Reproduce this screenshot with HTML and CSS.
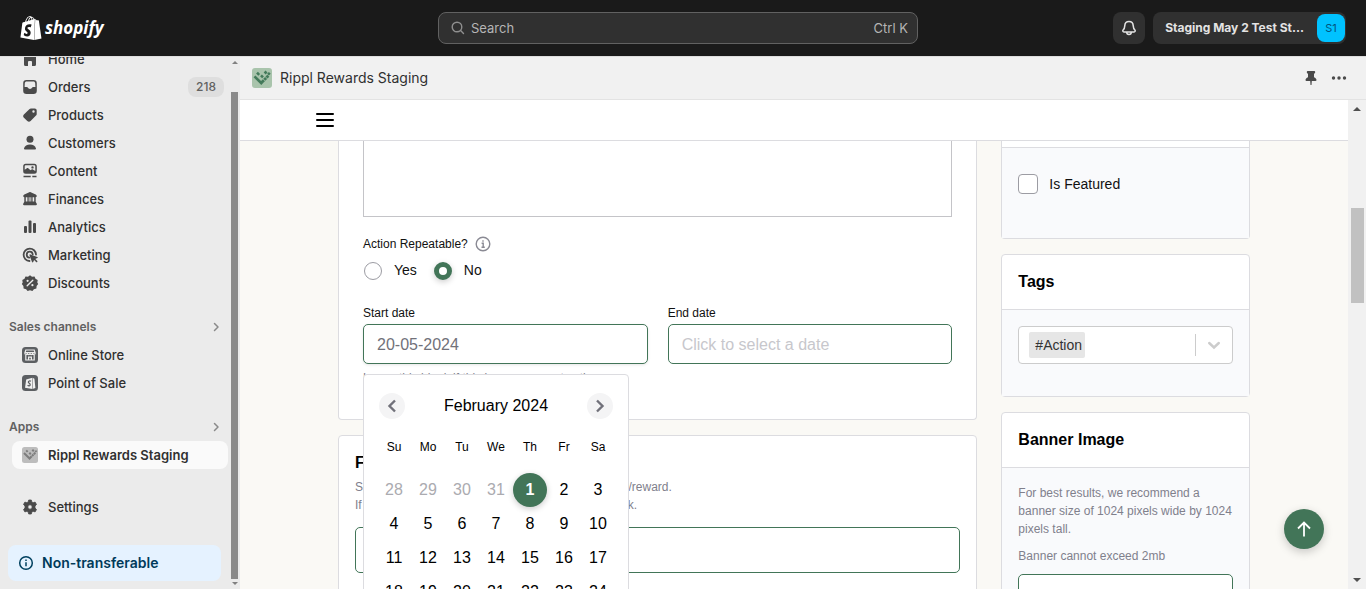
FILE: index.html
```
<!DOCTYPE html>
<html lang="en">
<head>
<meta charset="utf-8">
<title>Rippl Rewards Staging</title>
<link rel="stylesheet" href="styles.css">
</head>
<body>
<header class="topbar">
  <a class="logo" href="#" aria-label="Shopify">
    <svg width="24" height="24" viewBox="0 0 24 24" fill="#fff"><path d="M15.337 23.979l7.216-1.561s-2.604-17.613-2.625-17.73c-.018-.116-.114-.192-.211-.192s-1.929-.136-1.929-.136-1.275-1.274-1.439-1.411c-.045-.037-.075-.057-.121-.074l-.914 21.104h.023zM11.71 11.305s-.81-.424-1.774-.424c-1.447 0-1.504.906-1.504 1.141 0 1.232 3.24 1.715 3.24 4.629 0 2.295-1.44 3.76-3.406 3.76-2.354 0-3.54-1.465-3.54-1.465l.646-2.086s1.245 1.066 2.28 1.066c.675 0 .975-.545.975-.932 0-1.619-2.654-1.694-2.654-4.359-.034-2.237 1.571-4.416 4.827-4.416 1.257 0 1.875.361 1.875.361l-.945 2.715-.02.01zM11.17.83c.136 0 .271.038.405.135-.984.465-2.064 1.639-2.508 3.992-.656.213-1.293.405-1.889.578C7.697 3.75 8.951.84 11.17.84V.83zm1.235 2.949v.135c-.754.232-1.583.484-2.394.736.466-1.777 1.333-2.645 2.085-2.971.193.501.309 1.176.309 2.1zm.539-2.234c.694.074 1.141.867 1.429 1.755-.349.114-.735.231-1.158.366v-.252c0-.752-.096-1.371-.271-1.871v.002zm2.992 1.289c-.02 0-.06.021-.078.021s-.289.075-.714.21c-.423-1.233-1.176-2.37-2.508-2.37h-.115C12.135.209 11.669 0 11.265 0 8.159 0 6.675 3.877 6.21 5.846c-1.194.365-2.063.636-2.16.674-.675.213-.694.232-.772.87-.075.462-1.83 14.063-1.83 14.063L15.009 24l.927-21.166z"/></svg>
    <span class="wordmark">shopify</span>
  </a>
  <button class="search" type="button">
    <svg width="14" height="14" viewBox="0 0 14 14" fill="none" stroke="#8f8f8f" stroke-width="1.4" stroke-linecap="round"><circle cx="6" cy="6" r="4.8"/><path d="M9.6 9.6L12.500 12.500"/></svg>
    <span class="search-text">Search</span>
    <span>Ctrl K</span>
  </button>
  <div class="account">
    <button class="bell" type="button" aria-label="Notifications">
      <svg width="16" height="16" viewBox="0 0 16 16" fill="none" stroke="#e3e3e3" stroke-width="1.5" stroke-linejoin="round"><path d="M8 1.5c-2.4 0-4.1 1.8-4.2 4.1-.1 2.6-.6 3.3-1.7 4.4-.7.8-.2 1.9.8 1.9h10.2c1 0 1.500-1.100.8-1.900-1.100-1.100-1.600-1.800-1.700-4.400C12.100 3.300 10.400 1.500 8 1.500z"/><path d="M5.700 12c0 1.500.9 2.500 2.300 2.500s2.300-1 2.300-2.500"/></svg>
    </button>
    <button class="store" type="button"><span class="store-name">Staging May 2 Test St...</span><span class="avatar">S1</span></button>
  </div>
</header>
<div class="shell">
  <aside class="sidebar">
    <nav class="nav">
      <a class="nav-item" href="#"><svg class="icon" viewBox="0 0 20 20"><path d="M10 3l-6 5v7.500A1.500 1.500 0 0 0 5.500 17H8v-4a1 1 0 0 1 1-1h2a1 1 0 0 1 1 1v4h2.500a1.500 1.500 0 0 0 1.500-1.500V8z"/></svg>Home</a>
      <a class="nav-item" href="#"><svg class="icon" viewBox="0 0 20 20"><path fill-rule="evenodd" d="M6.500 3h7A3.300 3.300 0 0 1 16.800 6.300v7.400A3.300 3.300 0 0 1 13.500 17h-7a3.300 3.300 0 0 1-3.300-3.300V6.300A3.300 3.300 0 0 1 6.500 3zm.2 1.500c-1 0-1.800.7-1.900 1.700L4.600 10h2.200c.6 0 .9.300 1.200.8.400.7 1 1.200 2 1.200s1.600-.5 2-1.200c.300-.5.600-.8 1.200-.8h2.200l-.2-3.800c-.1-1-.9-1.700-1.900-1.700z"/></svg>Orders<span class="badge">218</span></a>
      <a class="nav-item" href="#"><svg class="icon" viewBox="0 0 20 20"><path fill-rule="evenodd" d="M11 3.500h3.700c1.200 0 2 .8 2 1.900v3.500c0 .7-.2 1.200-.7 1.700l-5.400 5.400c-1 1-2.300 1-3.300 0l-3.400-3.300c-1-1-1-2.300 0-3.300l5.400-5.200c.5-.5 1-.7 1.700-.7zm2.500 4.200a1.200 1.200 0 1 0 0-2.400 1.200 1.200 0 0 0 0 2.400z"/></svg>Products</a>
      <a class="nav-item" href="#"><svg class="icon" viewBox="0 0 20 20"><circle cx="10" cy="6.300" r="3.500"/><path d="M4 15.500c.6-2.700 3-4 6-4s5.400 1.300 6 4c.1.500-.3.900-.8.900H4.800c-.5 0-.9-.4-.8-.9z"/></svg>Customers</a>
      <a class="nav-item" href="#"><svg class="icon" viewBox="0 0 20 20"><path fill-rule="evenodd" d="M5.700 2.800h8.600a2.500 2.500 0 0 1 2.500 2.500v5a2.500 2.500 0 0 1-2.500 2.500H5.700a2.500 2.500 0 0 1-2.500-2.500v-5a2.500 2.500 0 0 1 2.500-2.500zm0 1.500a1 1 0 0 0-1 1v3.400l2.200-1.500c.5-.3.900-.3 1.300 0l2.300 2 1.100-.8c.4-.3.900-.3 1.300 0l2.400 1.600V5.300a1 1 0 0 0-1-1zm6.800 3.300a1.200 1.200 0 1 0 0-2.400 1.200 1.200 0 0 0 0 2.400z"/><path d="M3.500 14.700h7.200v1.500H3.500zM12.300 14.700h4.200v1.500h-4.200z"/></svg>Content</a>
      <a class="nav-item" href="#"><svg class="icon" viewBox="0 0 20 20"><path d="M9.300 3.200c.5-.2.900-.2 1.400 0l5 2.300c.7.300 1.100.9 1.100 1.600 0 .7-.5 1.100-1.100 1.100H4.300c-.6 0-1.100-.4-1.100-1.100 0-.7.400-1.300 1.100-1.600zM4.300 8.200h1.500V13H4.300zM7.400 8.200h1.300V13H7.400zM11.300 8.200h1.300V13h-1.300zM14.200 8.200h1.500V13h-1.500zM9.600 8.200h.8V13h-.8zM4.500 12.600h11l1.300 2.200c.3.700-.1 1.400-.8 1.400H4c-.7 0-1.100-.7-.8-1.400z"/></svg>Finances</a>
      <a class="nav-item" href="#"><svg class="icon" viewBox="0 0 20 20"><rect x="4" y="9" width="3" height="7" rx="1"/><rect x="8.500" y="3.500" width="3" height="12.500" rx="1"/><rect x="13" y="6" width="3" height="10" rx="1"/></svg>Analytics</a>
      <a class="nav-item" href="#"><svg class="icon" viewBox="0 0 20 20"><path fill="none" stroke="#4a4a4a" stroke-width="1.800" stroke-linecap="round" d="M16 9.500A6.200 6.200 0 1 0 9.500 16"/><path fill="none" stroke="#4a4a4a" stroke-width="1.800" stroke-linecap="round" d="M12.700 9.300a3 3 0 1 0-3.300 3.400"/><path d="M10.300 9.400l7 2.500c.6.200.6 1 0 1.200l-2 .9 2 2c.6.700-.5 1.700-1.200 1.100l-2-2-.9 2c-.2.600-1 .6-1.200 0l-2.500-6.900c-.2-.5.300-1 .8-.8z"/></svg>Marketing</a>
      <a class="nav-item" href="#"><svg class="icon" viewBox="0 0 20 20"><path d="M10 2.300l2 1.500 2.500-.3 1 2.300 2.200 1.200-.4 2.500.9 1.600-1.600 1.900-.2 2.500-2.500.7-1.500 1.800-2.400-.7-2.400.7-1.500-1.800-2.500-.7-.2-2.500L1.800 11.100l.9-1.600L2.300 7l2.200-1.200 1-2.300 2.500.3z"/><path d="M7.200 12.800l5.600-5.600" stroke="#ebebeb" stroke-width="1.400" stroke-linecap="round"/><circle cx="7.600" cy="7.800" r="1.100" fill="#ebebeb"/><circle cx="12.400" cy="12.200" r="1.100" fill="#ebebeb"/></svg>Discounts</a>
      <a class="nav-heading" href="#">Sales channels<svg width="8" height="10" viewBox="0 0 8 10" fill="none" stroke="#8a8a8a" stroke-width="1.500" stroke-linecap="round" stroke-linejoin="round"><path d="M2.500 1.500L6 5 2.500 8.500"/></svg></a>
      <a class="nav-item" href="#"><svg class="icon" viewBox="0 0 20 20"><rect x="2" y="2" width="16" height="16" rx="3.500" fill="#5c5f62"/><g fill="none" stroke="#ebebeb" stroke-width="1.200"><path d="M5.800 5h8.400l1 3c0 2-2.600 2-2.600.2 0 2-2.600 2-2.600 0 0 2-2.600 2-2.600 0C7.400 10 4.800 10 4.800 8zM4.800 7.700h10.400M5.800 10v5h8.400v-5M8.600 15v-2.800h2.800V15"/></g></svg>Online Store</a>
      <a class="nav-item" href="#"><svg class="icon" viewBox="0 0 20 20"><rect x="2" y="2" width="16" height="16" rx="3.500" fill="#5c5f62"/><path d="M6.200 6.500l6.300-1.800v11.200L5 14.700zM13 4.900l1.400.9 1 9.200-2.400.8z" fill="#f1f1f1"/><path d="M11 8.300c-1.200-.8-2.700-.3-2.600.9.100 1.200 2 1.100 1.800 2.600-.2 1.200-1.600 1.300-2.600.4" fill="none" stroke="#5c5f62" stroke-width="1.300"/></svg>Point of Sale</a>
      <a class="nav-heading" href="#">Apps<svg width="8" height="10" viewBox="0 0 8 10" fill="none" stroke="#8a8a8a" stroke-width="1.500" stroke-linecap="round" stroke-linejoin="round"><path d="M2.500 1.500L6 5 2.500 8.500"/></svg></a>
      <a class="nav-item active" href="#"><svg class="icon" viewBox="0 0 20 20"><rect x="2" y="2" width="16" height="16" rx="2.500" fill="#bdbdbd"/><g stroke="#7d7d7d" stroke-width="2" fill="none"><path d="M4 8l6.300 6.300M10.200 11.300l1.500 1.500M12 9.500l1.500 1.500M13.800 7.700l1.500 1.500M15.300 5.700l1.200 1.200M6.200 5.400l1.500 1.500M12.300 4.800l1.500 1.500M9.300 7.700l1.500 1.500"/></g></svg>Rippl Rewards Staging</a>
      <a class="nav-item settings" href="#"><svg class="icon" viewBox="0 0 20 20"><path fill-rule="evenodd" d="M8.700 3h2.600l.5 2 1.300.7 2-.6 1.400 2.400-1.500 1.500v2l1.500 1.500-1.400 2.400-2-.6-1.300.7-.5 2H8.700l-.5-2-1.300-.7-2 .6-1.400-2.400L5 11V9L3.500 7.500l1.400-2.400 2 .6L8.200 5zM10 12.200a2.200 2.200 0 1 0 0-4.400 2.200 2.200 0 0 0 0 4.400z" stroke="#4a4a4a" stroke-width=".8" stroke-linejoin="round"/></svg>Settings</a>
      <a class="notice" href="#"><svg width="16" height="16" viewBox="0 0 16 16" fill="none" stroke="#00405f" stroke-width="1.500"><circle cx="8" cy="8" r="6.300"/><path d="M8 7.300v4M8 4.500v1.600"/></svg>Non-transferable</a>
    </nav>
    <div class="side-scroll" aria-hidden="true"><i class="arrow up"></i><i class="thumb"></i><i class="arrow down"></i></div>
  </aside>
  <main class="main">
    <div class="appbar">
      <svg width="20" height="20" viewBox="0 0 20 20"><rect width="20" height="20" rx="3" fill="#a9c4ac"/><g stroke="#437a5a" stroke-width="2.600" fill="none"><path d="M2.500 8.300l7.700 7.700M10 12.200l2 2M12.200 9.900l2 2M14.400 7.600l2 2M16 4.800l1.800 1.800M5 4.600l2.200 2.200M12.600 3.500l2 2M9 7.300l2 2"/></g></svg>
      <h1 class="app-title">Rippl Rewards Staging</h1>
      <button class="icon-button" type="button" aria-label="Pin"><svg width="16" height="16" viewBox="0 0 16 16" fill="#4a4a4a"><path d="M4.700 1h6.600c.6 0 .9.400.9.900 0 1-.6 1.500-1.200 1.800v3.600c1.500.8 2.500 1.700 2.500 2.800 0 .5-.4.900-.9.900H8.800l-.3 4h-1l-.3-4H3.400c-.5 0-.9-.4-.9-.9 0-1.100 1-2 2.500-2.800V3.700c-.6-.3-1.200-.8-1.200-1.800 0-.5.300-.9.900-.9z"/></svg></button>
      <button class="icon-button" type="button" aria-label="More actions"><svg width="16" height="16" viewBox="0 0 16 16" fill="#4a4a4a"><circle cx="2.500" cy="8" r="1.700"/><circle cx="8" cy="8" r="1.700"/><circle cx="13.500" cy="8" r="1.700"/></svg></button>
    </div>
    <div class="frame">
      <div class="page">
        <div class="menubar"><button class="icon-button" type="button" aria-label="Menu"><svg width="18" height="16" viewBox="0 0 18 16" stroke="#000" stroke-width="2" stroke-linecap="round"><path d="M1 2h16M1 8h16M1 14h16"/></svg></button></div>
        <div class="columns">
          <div class="stack">
            <section class="card form clipped">
              <textarea class="editor" aria-label="Description"></textarea>
              <div class="repeat-label">Action Repeatable?<svg width="16" height="16" viewBox="0 0 16 16" fill="none" stroke="#8a8a94" stroke-width="1.400"><circle cx="8" cy="8" r="6.800"/><path d="M6.600 7.300h1.600V11M6.500 11.300h3.300M8 4.300v1.400"/></svg></div>
              <div class="radios">
                <label class="choice"><input class="radio" type="radio" name="repeat">Yes</label>
                <label class="choice"><input class="radio" type="radio" name="repeat" checked>No</label>
              </div>
              <div class="dates">
                <div class="field">
                  <label class="label" for="start">Start date</label>
                  <input class="input start" id="start" type="text" value="20-05-2024">
                  <p class="hint">Leave this blank if this is a permanent action.</p>
                  <div class="calendar">
                    <div class="cal-head">
                      <button class="cal-nav" type="button" aria-label="Previous month"><svg width="10" height="14" viewBox="0 0 10 14" fill="none" stroke="#71717a" stroke-width="2.400"><path d="M8 1.500L2.500 7 8 12.500"/></svg></button>
                      <span>February 2024</span>
                      <button class="cal-nav" type="button" aria-label="Next month"><svg width="10" height="14" viewBox="0 0 10 14" fill="none" stroke="#71717a" stroke-width="2.400"><path d="M2 1.500L7.500 7 2 12.500"/></svg></button>
                    </div>
                    <div class="week names"><span>Su</span><span>Mo</span><span>Tu</span><span>We</span><span>Th</span><span>Fr</span><span>Sa</span></div>
                    <div class="week">
                      <button class="day out" type="button">28</button><button class="day out" type="button">29</button><button class="day out" type="button">30</button><button class="day out" type="button">31</button><button class="day picked" type="button">1</button><button class="day" type="button">2</button><button class="day" type="button">3</button>
                      <button class="day" type="button">4</button><button class="day" type="button">5</button><button class="day" type="button">6</button><button class="day" type="button">7</button><button class="day" type="button">8</button><button class="day" type="button">9</button><button class="day" type="button">10</button>
                      <button class="day" type="button">11</button><button class="day" type="button">12</button><button class="day" type="button">13</button><button class="day" type="button">14</button><button class="day" type="button">15</button><button class="day" type="button">16</button><button class="day" type="button">17</button>
                      <button class="day" type="button">18</button><button class="day" type="button">19</button><button class="day" type="button">20</button><button class="day" type="button">21</button><button class="day" type="button">22</button><button class="day" type="button">23</button><button class="day" type="button">24</button>
                    </div>
                  </div>
                </div>
                <div class="field">
                  <label class="label" for="end">End date</label>
                  <input class="input" id="end" type="text" placeholder="Click to select a date">
                </div>
              </div>
            </section>
            <section class="card filters">
              <h2 class="title">Filters</h2>
              <p class="note">Select which customers are able to open this action/reward.<br>If everyone can view it, you can leave this field blank.</p>
              <input class="input tall" type="text" aria-label="Filters">
            </section>
          </div>
          <div class="stack">
            <section class="card clipped">
              <div class="card-head slim"></div>
              <div class="card-body featured"><label class="choice"><input class="check" type="checkbox">Is Featured</label></div>
            </section>
            <section class="card">
              <div class="card-head"><h2 class="title">Tags</h2></div>
              <div class="card-body">
                <div class="tagbox">
                  <select class="tag" aria-label="Tags"><option>#Action</option></select>
                  <svg width="16" height="22" viewBox="0 0 16 22" fill="none" stroke="#ccc" stroke-width="2.400" stroke-linecap="round"><path d="M3.200 9L8 13.500 12.800 9"/></svg>
                </div>
              </div>
            </section>
            <section class="card">
              <div class="card-head"><h2 class="title">Banner Image</h2></div>
              <div class="card-body banner">
                <p class="note">For best results, we recommend a banner size of 1024 pixels wide by 1024 pixels tall.</p>
                <p class="note">Banner cannot exceed 2mb</p>
                <input class="input tall" type="text" aria-label="Banner image">
              </div>
            </section>
          </div>
        </div>
      </div>
      <div class="page-scroll" aria-hidden="true"><i class="arrow up"></i><i class="thumb"></i><i class="arrow down"></i></div>
    </div>
  </main>
</div>
<button class="to-top" type="button" aria-label="Back to top"><svg width="14" height="16" viewBox="0 0 14 16" fill="none" stroke="#fff" stroke-width="1.800"><path d="M7 15.500V1.500M1 7.500l6-6 6 6"/></svg></button>
</body>
</html>
```
FILE: styles.css
```
*, *::before, *::after { box-sizing: border-box; }
body {
  margin: 0;
  height: 100vh;
  display: flex;
  flex-direction: column;
  overflow: hidden;
  background: #ebebeb;
  color: #303030;
  font: 500 13px/20px Inter, sans-serif;
}
button, input, select, textarea { font: inherit; color: inherit; margin: 0; }
button { border: 0; padding: 0; background: none; cursor: pointer; }
a { color: inherit; text-decoration: none; }
h1, h2, p { margin: 0; }
svg { flex: none; display: block; }

.topbar {
  flex: none;
  position: relative;
  z-index: 2;
  height: 56px;
  padding: 0 20px 0 10px;
  display: grid;
  grid-template-columns: 1fr minmax(0, 480px) 1fr;
  align-items: center;
  background: #1a1a1a;
}
.logo { display: flex; align-items: center; gap: 2px; padding-left: 9px; color: #fff; }
.wordmark { font: italic 700 17px/24px "Open Sans", sans-serif; }
.search {
  height: 32px;
  display: flex;
  align-items: center;
  gap: 6px;
  padding: 0 9px 0 12px;
  border: 1px solid #616161;
  border-radius: 8px;
  background: #303030;
  color: #b5b5b5;
  font-size: 13px;
  font-weight: 400;
}
.search-text { flex: 1; text-align: left; }
.account { display: flex; justify-content: flex-end; gap: 8px; }
.bell { width: 32px; height: 32px; display: grid; place-items: center; border-radius: 8px; background: #303030; }
.store { height: 32px; display: flex; align-items: center; gap: 13px; padding: 0 1px 0 12px; border-radius: 8px; background: #303030; color: #e3e3e3; font-size: 12px; font-weight: 700; }
.avatar { width: 28px; height: 28px; border-radius: 8px; background: #00c2ff; color: #00527c; font-weight: 400; font-size: 11px; line-height: 28px; text-align: center; }

.shell { flex: 1; min-height: 0; display: grid; grid-template-columns: 240px minmax(0, 1fr); }
.sidebar { display: flex; min-height: 0; overflow: hidden; border-top: 1px solid #dedede; }
.nav { flex: 1; display: flex; flex-direction: column; margin-top: -12px; }
.nav-item { flex: none; height: 28px; margin: 0 3px 0 12px; padding: 0 4px 0 8px; display: flex; align-items: center; gap: 8px; border-radius: 8px; font-weight: 500; }
.nav-item.active { background: #fafafa; font-weight: 600; }
.icon { width: 20px; height: 20px; fill: #4a4a4a; }
.badge { margin-left: auto; padding: 0 8px; border-radius: 8px; background: #dedede; color: #616161; font-size: 12px; }
.nav-heading { flex: none; height: 28px; margin-top: 16px; padding: 0 11px 0 9px; display: flex; align-items: center; justify-content: space-between; color: #616161; font-size: 12px; font-weight: 600; }
.settings { margin-top: 24px; }
.notice { flex: none; height: 36px; margin: 24px 10px 0 8px; padding: 0 10px; display: flex; align-items: center; gap: 8px; border-radius: 8px; background: #e5f2ff; color: #003a5a; font-size: 14px; font-weight: 600; }
.side-scroll { width: 9px; padding: 4px 2px 4px 0; display: flex; flex-direction: column; align-items: center; }
.side-scroll .thumb { width: 7px; flex: 1; margin: 28px 0 3px; background: #8a8a8a; }
.arrow { flex: none; border: 3px solid transparent; width: 0; height: 0; }
.arrow.up { border-top: 0; border-bottom-color: #808080; }
.arrow.down { border-bottom: 0; border-top-color: #808080; }

.main { display: flex; flex-direction: column; min-height: 0; }
.appbar { flex: none; height: 44px; padding: 0 19px 0 12px; display: flex; align-items: center; gap: 8px; border-top: 1px solid #dedede; border-bottom: 1px solid #e3e3e3; background: #f1f1f1; }
.app-title { flex: 1; font-size: 14px; font-weight: 400; line-height: 20px; }
.icon-button { display: grid; place-items: center; }
.appbar .icon-button { margin-left: 4px; }
.frame { flex: 1; min-height: 0; display: flex; overflow: hidden; background: #faf9f5; color: #111; font-family: "Liberation Sans", Arial, sans-serif; font-weight: 400; }
.page { flex: 1; min-width: 0; }
.menubar { height: 41px; padding-left: 76px; display: flex; align-items: center; border-bottom: 1px solid #dcdce0; background: #fff; }
.page-scroll { flex: none; width: 18px; padding: 7px 2px; display: flex; flex-direction: column; align-items: center; background: #f1f1f1; }
.page-scroll .thumb { width: 13px; height: 95px; margin: 97px 0 auto; background: #c1c1c1; }
.page-scroll .arrow { border-width: 4px; }
.page-scroll .arrow.up { border-top: 0; border-bottom-color: #505050; }
.page-scroll .arrow.down { border-bottom: 0; border-top-color: #505050; }

.columns { padding: 0 98px; display: grid; grid-template-columns: minmax(0, 18fr) minmax(0, 7fr); align-items: start; gap: 24px; }
.stack { display: grid; gap: 15px; }
.card { border: 1px solid #dcdce0; border-radius: 4px; background: #fff; }
.card.clipped { border-top: 0; border-radius: 0 0 4px 4px; }
.form { padding: 0 24px 50px; }
.editor { display: block; width: 100%; height: 76px; border: 1px solid #c4c4c8; border-top: 0; resize: none; background: #fff; }
.repeat-label { margin-top: 17px; display: flex; align-items: center; gap: 7px; font-size: 12px; }
.radios { margin-top: 6px; display: flex; gap: 16px; }
.choice { display: flex; align-items: center; gap: 12px; font-size: 14px; line-height: 20px; }
.radio { appearance: none; width: 18px; height: 18px; border: 1px solid #9c9ca3; border-radius: 50%; background: #fff; margin: 2px 0 0 1px; }
.radio:checked { border: 5px solid #427558; box-shadow: 0 2px 6px rgba(0, 0, 0, .2); }
.dates { margin-top: 23px; display: grid; grid-template-columns: 1fr 1fr; gap: 20px; }
.field { position: relative; }
.label { display: block; font-size: 12px; line-height: 20px; }
.input { display: block; width: 100%; height: 40px; margin-top: 1px; padding: 2px 13px 0; border: 1px solid #427558; border-radius: 5px; background: #fff; font-size: 16px; outline: 0; }
.input.start { color: #71717a; box-shadow: 0 1px 3px rgba(0, 0, 0, .1); }
.input::placeholder { color: #c7c7cc; opacity: 1; }
.input.tall { height: 46px; }
.hint { height: 0; margin-top: 5px; color: #80808c; font-size: 12px; line-height: 18px; }
.calendar { position: absolute; z-index: 1; top: 71px; left: 0; width: 266px; height: 240px; padding: 0 13px; border: 1px solid #dcdce0; border-radius: 4px; background: #fff; color: #000; }
.cal-head { margin: 18px 2px 0; display: flex; align-items: center; justify-content: space-between; font-size: 16px; line-height: 22px; }
.cal-nav { width: 26px; height: 26px; display: grid; place-items: center; border-radius: 50%; background: #f4f4f5; }
.week { display: grid; grid-template-columns: repeat(7, 34px); text-align: center; }
.names { margin: 18px 0 16px; font-size: 12px; line-height: 20px; }
.day { width: 34px; height: 34px; font-size: 16px; }
.day.out { color: #ababb0; }
.day.picked { border-radius: 50%; background: #427558; color: #fff; font-weight: 700; box-shadow: 0 2px 6px rgba(0, 0, 0, .2); }
.filters { padding: 16px 16px 24px; }
.title { color: #000; font-size: 16px; font-weight: 700; line-height: 22px; }
.note { color: #80808c; font-size: 12px; line-height: 18px; }
.filters .note { margin-top: 4px; }
.filters .input { margin-top: 13px; }
.card-head { height: 55px; padding: 16px; border-bottom: 1px solid #dcdce0; }
.card-head.slim { height: 7px; padding: 0; }
.card-body { padding: 16px 16px 32px; background: #f9fafc; }
.featured { height: 90px; padding-top: 26px; }
.check { appearance: none; width: 20px; height: 20px; border: 1px solid #9c9ca3; border-radius: 4px; background: #fff; }
.featured .choice { gap: 11px; }
.tagbox { height: 38px; padding: 0 10px; display: flex; align-items: center; border: 1px solid #ccc; border-radius: 4px; background: #fff; }
.tag { appearance: none; height: 26px; margin-right: auto; padding: 0 3px 0 6px; border: 0; border-radius: 2px; background: #e6e6e6; color: #333; font-size: 14px; }
.tagbox svg { box-sizing: content-box; padding-left: 10px; border-left: 1px solid #ccc; }
.banner { display: grid; gap: 9px; }
.banner .input { margin: 0; }
.to-top { position: fixed; z-index: 3; right: 42px; bottom: 40px; width: 40px; height: 40px; display: grid; place-items: center; border-radius: 50%; background: #427558; box-shadow: 0 3px 10px rgba(0, 0, 0, .2); }
```
